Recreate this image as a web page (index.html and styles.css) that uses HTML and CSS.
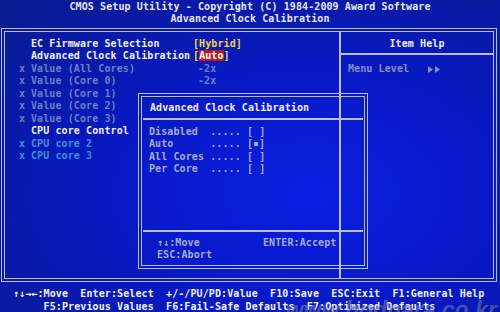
FILE: index.html
```html
<!DOCTYPE html>
<html lang="en">
<head>
    <meta charset="UTF-8">
    <title>CMOS Setup Utility</title>
    <link rel="stylesheet" href="styles.css">
</head>
<body>

    <header class="bios-header">
        <div class="line">CMOS Setup Utility - Copyright (C) 1984-2009 Award Software</div>
        <div class="line">Advanced Clock Calibration</div>
    </header>

    <main class="bios-frame">

        <section class="item-list">
            <div class="row"><span class="mark"></span><span class="label">EC Firmware Selection</span><span class="value yellow">[Hybrid]</span></div>
            <div class="row"><span class="mark"></span><span class="label">Advanced Clock Calibration</span><span class="value yellow">[<span class="selected">Auto</span>]</span></div>
            <div class="row off"><span class="mark">x</span><span class="label">Value (All Cores)</span><span class="value shift">-2x</span></div>
            <div class="row off"><span class="mark">x</span><span class="label">Value (Core 0)</span><span class="value shift">-2x</span></div>
            <div class="row off"><span class="mark">x</span><span class="label">Value (Core 1)</span></div>
            <div class="row off"><span class="mark">x</span><span class="label">Value (Core 2)</span></div>
            <div class="row off"><span class="mark">x</span><span class="label">Value (Core 3)</span></div>
            <div class="row"><span class="mark"></span><span class="label">CPU core Control</span></div>
            <div class="row cyan"><span class="mark">x</span><span class="label">CPU core 2</span></div>
            <div class="row cyan"><span class="mark">x</span><span class="label">CPU core 3</span></div>
        </section>

        <aside class="help-panel">
            <div class="help-title">Item Help</div>
            <div class="help-body line">Menu Level   <svg class="arrows" width="13" height="7" viewBox="0 0 13 7"><path d="M0 0 L5 3.5 L0 7 Z M7 0 L12 3.5 L7 7 Z" fill="#8290c4"/></svg></div>
        </aside>

        <!-- popup dialog over the item list -->
        <div class="dialog">
            <div class="dialog-title">Advanced Clock Calibration</div>
            <div class="dialog-options">
                <div class="line">Disabled  ..... [ ]</div>
                <div class="line">Auto      ..... [<span class="dot"></span>]</div>
                <div class="line">All Cores ..... [ ]</div>
                <div class="line">Per Core  ..... [ ]</div>
            </div>
            <div class="dialog-keys">
                <span>↑↓:Move</span><span>ENTER:Accept</span>
                <span>ESC:Abort</span><span></span>
            </div>
        </div>

    </main>

    <footer class="bios-footer">
        <div class="line">↑↓→←:Move  Enter:Select  +/-/PU/PD:Value  F10:Save  ESC:Exit  F1:General Help</div>
        <div class="line">     F5:Previous Values  F6:Fail-Safe Defaults  F7:Optimized Defaults</div>
    </footer>

    <div class="watermark">www.bodnara.co.kr</div>

</body>
</html>
```

FILE: styles.css
```css
:root {
    --line: #b6bee2;
    --text: #eceef8;
    --muted: #a4acd2;
    --off: #6a80c6;
    --cyan: #3f8ee4;
    --yellow: #f2d43c;
    --red: #c01818;
}

* {
    margin: 0;
    padding: 0;
    box-sizing: border-box;
}

html, body {
    width: 100%;
    height: 100%;
    overflow: hidden;
}

body {
    position: relative;
    font-family: 'DejaVu Sans Mono', monospace;
    font-size: 10px;
    font-weight: 700;
    letter-spacing: 0.1px;
    line-height: 12.4px;
    color: var(--text);
    background: radial-gradient(ellipse at 62% 62%, #0a1fe2 0%, #0819c4 45%, #0b1b8e 100%);
}

/* Text lines keep their column spacing */
.line, .row {
    white-space: pre;
}

/* Title lines */
.bios-header {
    padding-top: 1px;
    text-align: center;
    color: #e4e6f2;
}

/* Main double-lined frame */
.bios-frame {
    position: relative;
    display: flex;
    height: 254px;
    margin: 2px 3px 0 1px;
    border: 4px double var(--line);
}

.item-list {
    width: 334px;
    padding: 6px 0 0 14px;
}

.row {
    display: flex;
    line-height: 12.5px;
}

.row .mark { width: 12px; }
.row .label { width: 162px; }
.row .value.shift { padding-left: 5px; }

.row.off { color: var(--off); }
.row.cyan { color: var(--cyan); }

.yellow { color: var(--yellow); }

.selected {
    background-color: var(--red);
    color: #ffffff;
}

.help-panel {
    flex-grow: 1;
    border-left: 2px solid var(--line);
}

.help-title {
    height: 23px;
    line-height: 23px;
    text-align: center;
    border-bottom: 2px solid var(--line);
}

.help-body {
    padding: 8px 0 0 7px;
    color: #8290c4;
}

.arrows { vertical-align: -1px; }

/* Popup */
.dialog {
    position: absolute;
    left: 133px;
    top: 61px;
    width: 230px;
    height: 176px;
    display: flex;
    flex-direction: column;
    border: 4px double var(--line);
}

.dialog-title {
    height: 23px;
    line-height: 22px;
    padding-left: 7px;
    margin: 0 1px;
    border-bottom: 2px solid var(--line);
}

.dialog-options {
    flex-grow: 1;
    padding: 6px 0 0 7px;
    line-height: 12.5px;
    color: var(--muted);
}

.dot {
    display: inline-block;
    width: 4px;
    height: 4px;
    margin: 0 1px;
    background-color: var(--muted);
    vertical-align: 1px;
}

.dialog-keys {
    display: grid;
    grid-template-columns: 106px auto;
    padding: 5px 0 3px 14px;
    margin: 0 1px;
    border-top: 2px solid var(--line);
    line-height: 12.6px;
    color: var(--muted);
}

/* Key help at the bottom */
.bios-footer {
    margin-top: 6px;
    padding-left: 13px;
    line-height: 12.8px;
    color: #eef0fa;
}

.watermark {
    position: absolute;
    right: 3px;
    bottom: -4px;
    font-family: 'Liberation Sans', sans-serif;
    font-size: 23px;
    font-style: italic;
    font-weight: 700;
    letter-spacing: 0;
    color: rgba(225, 230, 255, 0.3);
    text-shadow: 1px 1px 1px rgba(0, 0, 40, 0.35);
}
```
